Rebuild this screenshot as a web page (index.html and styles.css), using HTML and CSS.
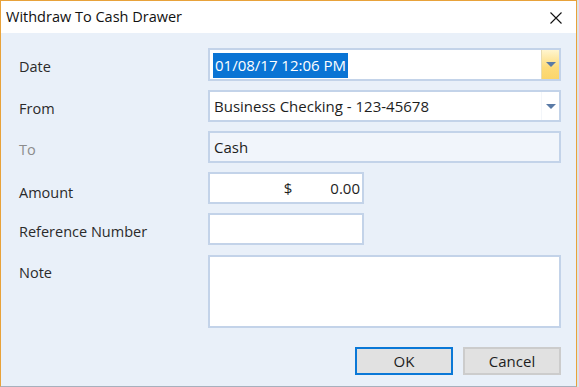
FILE: index.html
```html
<!DOCTYPE html>
<html lang="en">
<head>
    <meta charset="UTF-8">
    <title>Withdraw To Cash Drawer</title>
    <link rel="stylesheet" href="styles.css">
</head>
<body>
    <div class="window">
        <div class="titlebar">
            <span class="title">Withdraw To Cash Drawer</span>
            <svg class="close" width="12" height="12" viewBox="0 0 12 12">
                <path d="M0.5 0.5 L11.5 11.5 M11.5 0.5 L0.5 11.5" stroke="#111" stroke-width="1.1" fill="none"/>
            </svg>
        </div>
        <div class="content">
            <div class="row">
                <label class="label">Date</label>
                <div class="field combo">
                    <span class="value"><span class="selected">01/08/17 12:06 PM</span></span>
                    <span class="drop hot"><span class="arrow"></span></span>
                </div>
            </div>
            <div class="row">
                <label class="label">From</label>
                <div class="field combo">
                    <span class="value">Business Checking - 123-45678</span>
                    <span class="drop"><span class="arrow"></span></span>
                </div>
            </div>
            <div class="row">
                <label class="label muted">To</label>
                <div class="field readonly">
                    <span class="value">Cash</span>
                </div>
            </div>
            <div class="row">
                <label class="label low">Amount</label>
                <div class="field short money">
                    <span class="currency">$</span>
                    <span class="amount">0.00</span>
                </div>
            </div>
            <div class="row">
                <label class="label">Reference Number</label>
                <div class="field short"></div>
            </div>
            <div class="row">
                <label class="label">Note</label>
                <div class="field note"></div>
            </div>
            <div class="buttons">
                <button class="btn default">OK</button>
                <button class="btn">Cancel</button>
            </div>
        </div>
    </div>
</body>
</html>
```

FILE: styles.css
```css
body { margin: 0; background: #dfe3e8; font-family: "Open Sans", "Noto Sans", sans-serif; color: #222; }
.window {
    width: 575px;
    height: 385px;
    border: 1px solid #e8a23a;
    border-bottom-color: #a7b0bd;
    background: #e9f0f9;
    display: flex;
    flex-direction: column;
}
.titlebar {
    height: 32px;
    background: #fff;
    display: flex;
    align-items: center;
    justify-content: space-between;
    padding: 0 14px 0 5px;
}
.title { font-size: 14.5px; color: #111; margin-top: -1px; }
.close { margin-top: 1px; }
.content { padding: 15px 15px 0 18px; display: flex; flex-direction: column; gap: 9px; }
.row { display: flex; align-items: flex-start; }
.label {
    width: 189px;
    height: 32px;
    flex: none;
    font-size: 14.5px;
    line-height: 37px;
    color: #2b2b2b;
}
.label.muted { color: #8c8c8c; }
.label.low { line-height: 42px; }
.field {
    box-sizing: border-box;
    width: 354px;
    height: 32px;
    border: 2px solid #c3d3e9;
    background: #fff;
    display: flex;
    align-items: center;
    font-size: 15px;
    color: #1e1e1e;
}
.row:first-child .field { height: 33px; }
.value { padding-left: 4px; flex: 1; }
.selected { background: #0a74d4; color: #fff; padding: 2px 2px 3px 2px; margin-left: -1px; }
.drop {
    width: 17px;
    height: 100%;
    display: flex;
    align-items: center;
    justify-content: center;
    border-left: 1px solid #f3f6fa;
}
.drop.hot {
    background: linear-gradient(#fff5cf, #fddb7a 60%, #fbd56a);
    border-left-color: #e7dcb2;
}
.arrow {
    width: 0;
    height: 0;
    border-left: 5px solid transparent;
    border-right: 5px solid transparent;
    border-top: 5px solid #5a7aa6;
}
.readonly { background: #f1f5fb; }
.short { width: 156px; }
.money { justify-content: flex-end; padding-right: 2px; }
.currency { margin-right: 38px; }
.note { height: 73px; margin-top: 1px; }
.buttons { display: flex; justify-content: flex-end; gap: 10px; margin-top: 10px; }
.btn {
    box-sizing: border-box;
    width: 98px;
    height: 28px;
    background: #e1e1e1;
    border: 2px solid #cccccc;
    font-family: "Open Sans", "Noto Sans", sans-serif;
    font-size: 15px;
    color: #1e1e1e;
    padding: 0;
}
.btn.default { border-color: #0a78d7; }
```
